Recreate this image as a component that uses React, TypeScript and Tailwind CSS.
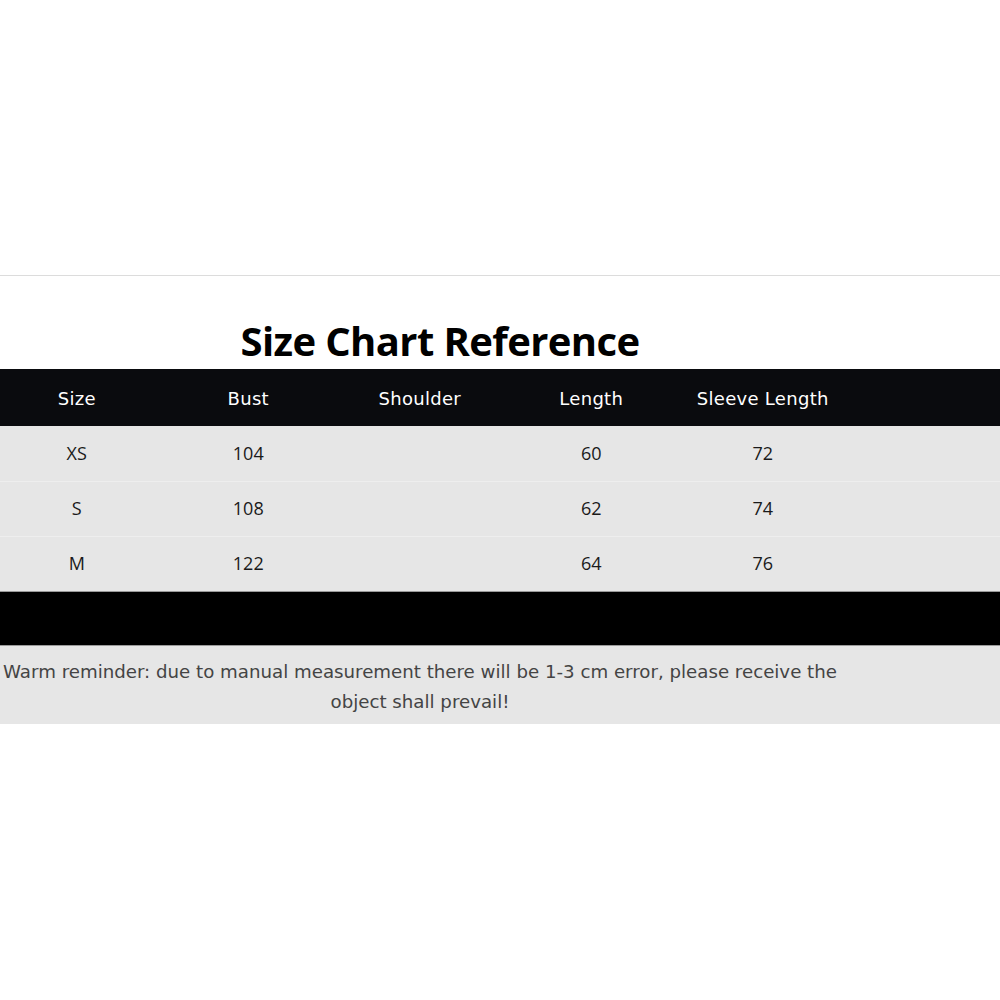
const headers = ["Size", "Bust", "Shoulder", "Length", "Sleeve Length", ""];

const rows = [
  ["XS", "104", "", "60", "72", ""],
  ["S", "108", "", "62", "74", ""],
  ["M", "122", "", "64", "76", ""],
];

const hand = "font-['DejaVu_Sans',sans-serif]";

export default function App() {
  return (
    <div className="min-h-[1000px] w-[1000px] overflow-hidden bg-white">
      <div className="h-[275px]" />
      <div className="h-px bg-[#dcdcdc]" />
      <div className="w-[880px] pt-[40px] pb-[3px] text-center font-['Open_Sans',sans-serif] text-[40px] font-bold leading-[50px] tracking-[-0.6px] text-black">
        Size Chart Reference
      </div>

      <div className="h-[57px] bg-[#0a0b0e] pt-[2px]">
        <div className="-ml-[9px] grid h-full grid-cols-[repeat(6,171.5px)] items-center">
          {headers.map((h, i) => (
            <div key={i} className={`${hand} text-center text-[18px] tracking-[0.3px] text-white`}>
              {h}
            </div>
          ))}
        </div>
      </div>

      {rows.map((r, i) => (
        <div
          key={i}
          className={`h-[55px] bg-[#e6e6e6] ${i > 0 ? "border-t border-[#eeeeee]" : ""}`}
        >
          <div className="-ml-[9px] grid h-full grid-cols-[repeat(6,171.5px)] items-center pb-[1px]">
            {r.map((c, j) => (
              <div
                key={j}
                className={`text-center font-['Open_Sans',sans-serif] text-[18px] text-[#1a1a1a] ${
                  j === 0 && c === "M" ? "text-[15px]" : ""
                }`}
              >
                {c}
              </div>
            ))}
          </div>
        </div>
      ))}

      <div className="h-[55px] border-y border-[#9a9a9a] bg-black" />

      <div className="h-[78px] bg-[#e6e6e6] pt-[11px]">
        <p
          className={`w-[840px] text-center ${hand} text-[18.2px] leading-[30px] text-[#444]`}
        >
          Warm reminder: due to manual measurement there will be 1-3 cm error, please receive the
          object shall prevail!
        </p>
      </div>
    </div>
  );
}
